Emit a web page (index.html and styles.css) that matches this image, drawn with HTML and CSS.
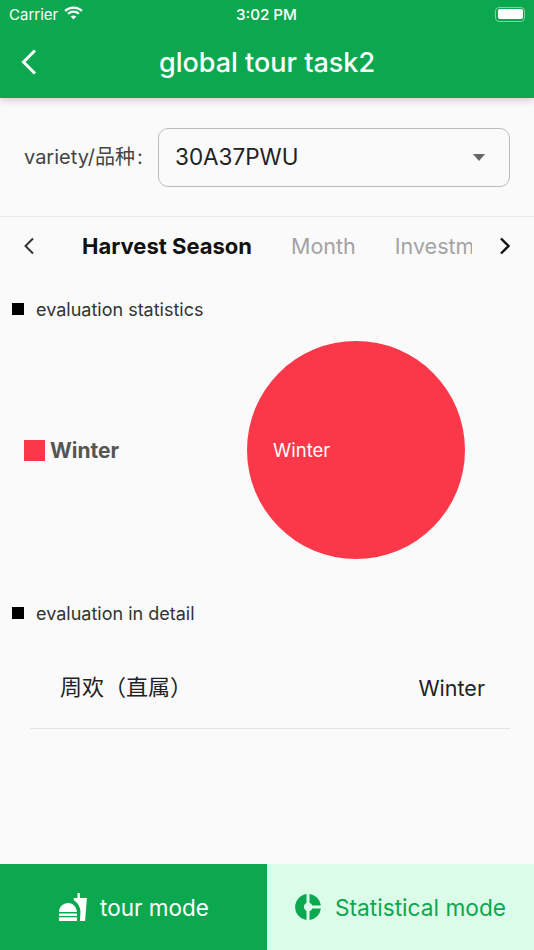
FILE: index.html
```html
<!DOCTYPE html>
<html lang="en">
<head>
<meta charset="UTF-8">
<meta name="viewport" content="width=device-width, initial-scale=1.0">
<title>global tour task2</title>
<link rel="stylesheet" href="styles.css">
</head>
<body>
<div class="page">
  <header class="appbar">
    <div class="status">
      <div class="status-left">
        <span>Carrier</span>
        <svg width="19" height="14" viewBox="0 0 20 15"><path d="M1 5.200C6 .6 14 .6 19 5.200" fill="none" stroke="#fff" stroke-width="2.400"/><path d="M4.200 8.300c3.300-3 8.300-3 11.600 0" fill="none" stroke="#fff" stroke-width="2.400"/><path d="M7 11.200c1.800-1.500 4.200-1.500 6 0l-3 3.300z" fill="#fff"/></svg>
      </div>
      <span class="status-time">3:02 PM</span>
      <div class="battery"><div class="battery-fill"></div></div>
    </div>
    <div class="navbar">
      <svg class="back" width="18" height="28" viewBox="0 0 18 28"><path d="M15 2.500 3.500 14 15 25.500" fill="none" stroke="#fff" stroke-width="3"/></svg>
      <h1 class="title">global tour task2</h1>
    </div>
  </header>

  <div class="variety">
    <span class="variety-label">variety/品种<span class="colon">:</span></span>
    <div class="select">
      <span>30A37PWU</span>
      <div class="caret"></div>
    </div>
  </div>

  <div class="tabs">
    <svg width="12" height="18" viewBox="0 0 12 18"><path d="M10 1.500 2.500 9l7.500 7.500" fill="none" stroke="#333" stroke-width="2"/></svg>
    <div class="tab-list">
      <span class="tab active">Harvest Season</span>
      <span class="tab">Month</span>
      <span class="tab">Investment</span>
    </div>
    <svg width="12" height="18" viewBox="0 0 12 18"><path d="M2 1.500 9.500 9 2 16.500" fill="none" stroke="#111" stroke-width="2.400"/></svg>
  </div>

  <div class="section-head"><i></i>evaluation statistics</div>
  <div class="chart">
    <div class="legend"><i></i>Winter</div>
    <div class="pie"><span>Winter</span></div>
  </div>

  <div class="section-head detail-head"><i></i>evaluation in detail</div>
  <div class="detail-row">
    <span class="detail-name">周欢（直属）</span>
    <span class="detail-value">Winter</span>
  </div>

  <footer class="modes">
    <div class="mode mode-tour">
      <svg width="30" height="30" viewBox="0 0 30 30" fill="#fff"><path d="M1 20C1 14.500 5.500 11 10 11s8 3 9 9z"/><rect x="1" y="21.500" width="18" height="2.400"/><path d="M1 25.300h18V29H1z"/><path d="M15.500 6H19.500V1h2.400v5h7l-1.800 23h-5.200l.6-9.500c-.6-6-3.300-9-6.500-11z"/></svg>
      <span>tour mode</span>
    </div>
    <div class="mode mode-stat">
      <svg width="26" height="26" viewBox="0 0 26 26" fill="#0ba84f"><path d="M11.500.1A13 13 0 0 0 11.500 25.900V17a4.500 4.500 0 0 1 0-8.200z"/><path d="M14.500.1A13 13 0 0 1 25.900 11.500H17.300a4.500 4.500 0 0 0-2.800-2.800z"/><path d="M25.900 14.500A13 13 0 0 1 14.500 25.900V17.300a4.500 4.500 0 0 0 2.800-2.800z"/></svg>
      <span>Statistical mode</span>
    </div>
  </footer>
</div>
</body>
</html>
```

FILE: styles.css
```css
*{box-sizing:border-box}
body{margin:0;background:#fafafa;font-family:Inter,"Noto Sans CJK SC",sans-serif;color:#222}
.page{width:534px;height:950px;display:flex;flex-direction:column;overflow:hidden}
.appbar{height:98px;background:#0ba84f;color:#fff;box-shadow:0 2px 8px rgba(0,0,0,.2);flex:none}
.status{height:28px;display:flex;align-items:center;justify-content:space-between;padding:0 9px;position:relative;font-size:15px}
.status-left{display:flex;align-items:center;gap:6px}
.status-left svg{margin-top:-3px}
.status-time{position:absolute;left:236px;top:5px;font-size:15.200px;font-weight:500}
.battery{width:30px;height:15px;border:1px solid #7fd3a3;border-radius:4px;padding:1.500px}
.battery-fill{height:100%;background:#fff;border-radius:2px}
.navbar{height:70px;padding-bottom:2px;display:flex;align-items:center;justify-content:center;position:relative}
.back{position:absolute;left:20px;top:20px}
.title{margin:0;font-size:27px;font-weight:500}
.variety{height:119px;flex:none;display:flex;align-items:center;padding:0 24px;gap:12px;border-bottom:1px solid #e8e8e8}
.variety-label{width:122px;flex:none;margin-top:-3px;font-size:20px;color:#444;white-space:nowrap}
.colon{margin-left:2px}
.select{width:352px;height:59px;border:1px solid #bbb;border-radius:10px;display:flex;align-items:center;justify-content:space-between;padding:0 24px 0 16px;font-size:22.500px}
.select span{margin-top:-2px}
.caret{width:0;height:0;border:6px solid transparent;border-top:7px solid #666;border-bottom:0}
.tabs{height:58px;flex:none;display:flex;align-items:center;padding:0 23px}
.tab-list{width:390px;flex:none;margin:0 27px 0 47px;display:flex;gap:39px;overflow:hidden;white-space:nowrap}
.tab{font-size:21.500px;color:#a3a3a3}
.tab.active{font-size:22px;font-weight:700;color:#111}
.section-head{display:flex;align-items:center;font-size:18px;color:#333;margin:23px 12px 0;height:22px}
.section-head i{width:12px;height:12px;background:#000;margin-right:12px}
.chart{height:220px;margin-top:20px;display:flex;align-items:center;padding-left:24px}
.legend{display:flex;align-items:center;font-size:21px;font-weight:700;color:#555;width:223px}
.legend i{width:21px;height:21px;background:#fa3849;margin-right:5px}
.pie{width:218px;height:218px;border-radius:50%;background:#fa3849;color:#fff;display:flex;align-items:center;padding-left:26px;font-size:18.500px}
.detail-head{margin-top:42px}
.detail-row{height:84px;margin:21px 24px 0 30px;padding:0 25px 0 30px;display:flex;align-items:center;justify-content:space-between;border-bottom:1px solid #e4e4e4;font-size:22px;color:#222}
.detail-name{margin-top:-3px}
.detail-value{font-size:21.500px;margin-top:2px}
.modes{margin-top:auto;height:86px;flex:none;display:flex}
.mode{width:50%;display:flex;align-items:center;justify-content:center;gap:12px;font-size:22.500px}
.mode-tour{background:#0ba84f;color:#fff}
.mode-stat{background:#dbfce8;color:#0ba84f;gap:14px;font-size:22.700px}
```
